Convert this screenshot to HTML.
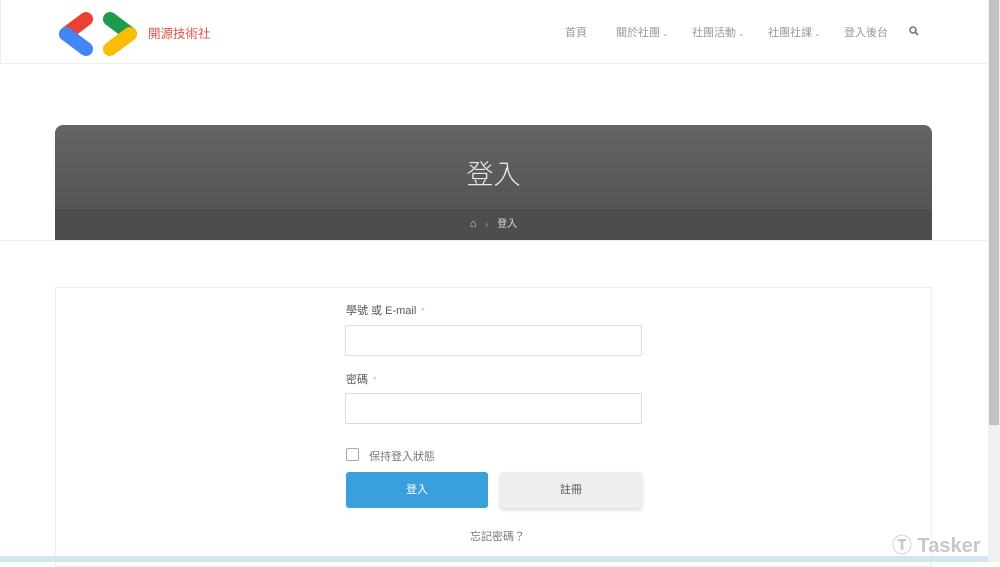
<!DOCTYPE html>
<html><head><meta charset="utf-8"><style>
*{margin:0;padding:0;box-sizing:border-box}
body{width:1000px;height:562px;overflow:hidden;background:#fff;font-family:"Liberation Sans","Noto Sans CJK TC",sans-serif;position:relative;color:#555}
.hdr{position:absolute;left:0;top:0;width:988px;height:64px;border-bottom:1px solid #eee;border-left:1px solid #eee}
.brand{position:absolute;left:147px;top:23px;font-size:12.5px;color:#e0524a}
.nav{position:absolute;top:24px;font-size:11px;color:#999}
.car{font-size:8px;color:#aaa;margin-left:2px}
.hero{position:absolute;left:55px;top:125px;width:877px;height:115px;border-radius:8px 8px 0 0;background:linear-gradient(#646464,#4f4f4f);overflow:hidden}
.hero .t{position:absolute;top:28px;width:100%;text-align:center;color:#e8e8e8;font-size:27px;font-weight:300}
.hero .bc{position:absolute;top:83px;left:0;right:0;height:32px;border-top:1px solid #5c5c5c;background:#4d4d4d;text-align:center;font-size:10px;color:#ddd;line-height:30px}
.line{position:absolute;left:0;top:240px;width:988px;height:1px;background:#eee}
.box{position:absolute;left:55px;top:287px;width:877px;height:280px;border:1px solid #eee}
.lbl{position:absolute;left:346px;font-size:11px;color:#555}
.lbl i{font-style:normal;color:#bbb;margin-left:5px;font-size:9px}
.inp{position:absolute;left:345px;width:297px;height:31px;border:1px solid #ddd;background:#fff}
.btn{position:absolute;top:472px;height:36px;border-radius:3px;text-align:center;line-height:36px;font-size:11px}
.sb{position:absolute;right:0;top:0;width:12px;height:562px;background:#f0f0f0}
.sb div{position:absolute;left:1px;top:0;width:10px;height:425px;background:#c1c1c1}
.bot{position:absolute;left:0;top:556px;width:988px;height:6px;background:#d2e6f0}
</style></head><body>
<div class="hdr">
<svg style="position:absolute;left:56px;top:10px" width="82" height="48" viewBox="0 0 82 48">
<g stroke-linecap="round" stroke-width="14" fill="none">
<line x1="29" y1="9" x2="9" y2="24" stroke="#e94235"/>
<line x1="9" y1="24" x2="29" y2="39" stroke="#4285f4"/>
<line x1="53" y1="9" x2="73" y2="24" stroke="#1e9a4e"/>
<line x1="73" y1="24" x2="53" y2="39" stroke="#fbbc04"/>
</g></svg>
<div class="brand">開源技術社</div>
<div class="nav" style="left:564px">首頁</div>
<div class="nav" style="left:615px">關於社團<span class="car">⌄</span></div>
<div class="nav" style="left:691px">社團活動<span class="car">⌄</span></div>
<div class="nav" style="left:767px">社團社課<span class="car">⌄</span></div>
<div class="nav" style="left:843px">登入後台</div>
<svg style="position:absolute;left:908px;top:26px" width="10" height="10" viewBox="0 0 10 10"><circle cx="4" cy="4" r="3" stroke="#777" stroke-width="1.6" fill="none"/><line x1="6.3" y1="6.3" x2="9" y2="9" stroke="#777" stroke-width="1.8"/></svg>
</div>
<div class="hero"><div class="t">登入</div><div class="bc"><span style="font-size:11px">⌂</span> <span style="color:#999;margin:0 6px">›</span> 登入</div></div>
<div class="line"></div>
<div class="box"></div>
<div class="lbl" style="top:302px">學號 或 E-mail<i>*</i></div>
<div class="inp" style="top:325px"></div>
<div class="lbl" style="top:371px">密碼<i>*</i></div>
<div class="inp" style="top:393px"></div>
<div style="position:absolute;left:346px;top:448px;width:13px;height:13px;border:1px solid #aaa;border-radius:2px"></div>
<div style="position:absolute;left:369px;top:448px;font-size:11px;color:#777">保持登入狀態</div>
<div class="btn" style="left:346px;width:142px;background:#3aa0dc;color:#fff">登入</div>
<div class="btn" style="left:500px;width:142px;background:#eee;color:#555;box-shadow:0 2px 4px rgba(0,0,0,.15)">註冊</div>
<div style="position:absolute;left:470px;top:528px;font-size:11px;color:#777">忘記密碼？</div>
<div style="position:absolute;left:892px;top:529px;font-size:20px;font-weight:bold;color:#c8c8c8">Ⓣ Tasker</div>
<div class="bot"></div>
<div class="sb"><div></div></div>
</body></html>
